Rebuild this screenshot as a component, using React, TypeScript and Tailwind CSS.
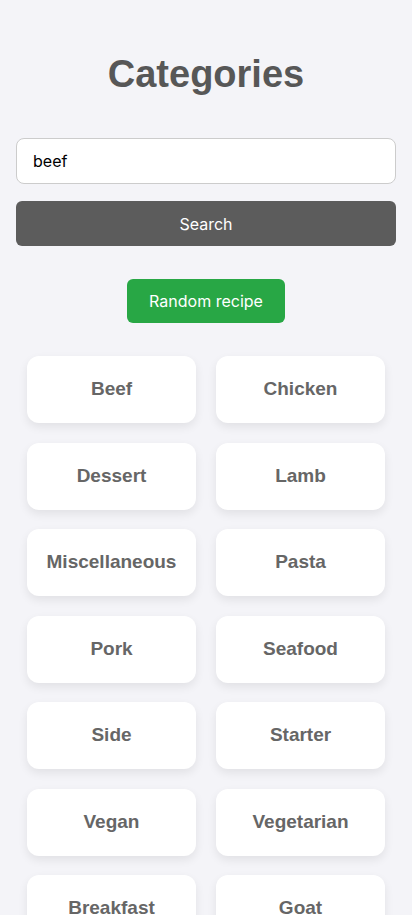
import React from "react";

const categories = [
  "Beef",
  "Chicken",
  "Dessert",
  "Lamb",
  "Miscellaneous",
  "Pasta",
  "Pork",
  "Seafood",
  "Side",
  "Starter",
  "Vegan",
  "Vegetarian",
  "Breakfast",
  "Goat",
];

const App = () => {
  return (
    <div className="min-h-screen bg-[#f4f4f8] px-4 pt-[50px] pb-10 font-['Inter',sans-serif]">
      <h1 className="text-center text-[38px] leading-[48px] font-bold text-[#575757] font-['Liberation_Sans',Arial,sans-serif]">
        Categories
      </h1>

      <div className="mt-[40px] flex flex-col gap-[17px]">
        <input
          type="text"
          defaultValue="beef"
          className="h-[46px] w-full rounded-lg border border-[#cccccc] bg-white px-4 text-[16px] text-black outline-none"
        />
        <button className="h-[45px] w-full rounded-md bg-[#5c5c5c] text-[16px] text-white">
          Search
        </button>
      </div>

      <div className="mt-[33px] flex justify-center">
        <button className="h-[44px] w-[158px] rounded-md bg-[#28a745] text-[16px] text-white">
          Random recipe
        </button>
      </div>

      <div className="mx-[11px] mt-[33px] grid grid-cols-2 gap-x-[20px] gap-y-[19.5px]">
        {categories.map((name) => (
          <div
            key={name}
            className="flex h-[67px] items-center justify-center rounded-xl bg-white shadow-[0_4px_10px_rgba(0,0,0,0.08)]"
          >
            <span className="text-[19px] font-bold text-[#666666] font-['Liberation_Sans',Arial,sans-serif]">
              {name}
            </span>
          </div>
        ))}
      </div>
    </div>
  );
};

export default App;
